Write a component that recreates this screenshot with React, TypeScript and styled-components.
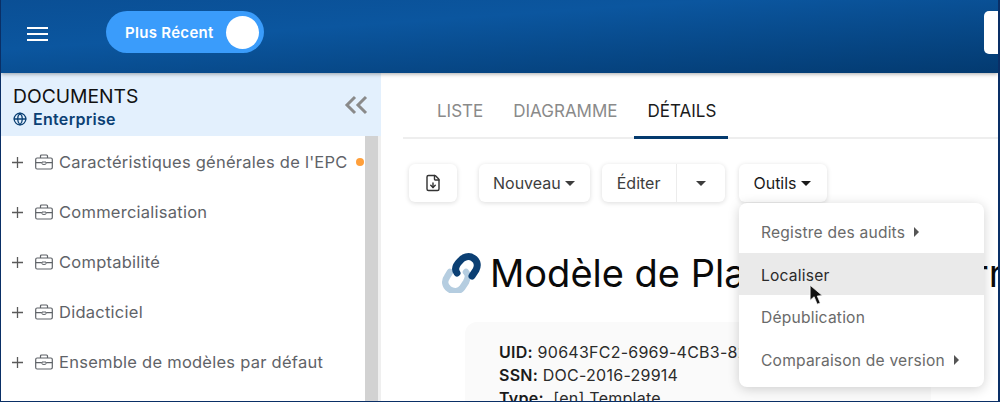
import React from "react";
import styled, { createGlobalStyle } from "styled-components";
import { Globe, FileDown } from "lucide-react";

const Global = createGlobalStyle`
  html, body { margin: 0; padding: 0; background: #fff; }
  body { font-family: Inter, "Liberation Sans", sans-serif; }
`;

const Frame = styled.div`
  position: relative;
  width: 1000px;
  height: 402px;
  box-sizing: border-box;
  border: 1px solid #0a2f66;
  border-right-width: 2px;
  border-top: 0;
  overflow: hidden;
  display: flex;
  flex-direction: column;
  background: #fff;
`;

const TopBar = styled.header`
  flex: 0 0 73px;
  display: flex;
  align-items: center;
  padding-left: 26px;
  background: linear-gradient(176deg, #0a4f95 0%, #0b569f 35%, #033a70 100%);
  box-shadow: 0 1px 4px rgba(0, 0, 0, 0.35);
  position: relative;
  z-index: 2;
`;

const Burger = styled.div`
  width: 21px;
  height: 14px;
  margin-top: -6px;
  display: flex;
  flex-direction: column;
  justify-content: space-between;
  margin-right: 58px;
  span { display: block; height: 2px; background: #fff; }
`;

const Toggle = styled.div`
  width: 158px;
  height: 42px;
  margin-top: -9px;
  box-sizing: border-box;
  border-radius: 21px;
  background: #3a9cfb;
  display: flex;
  align-items: center;
  justify-content: space-between;
  padding: 0 5px 0 19px;
  color: #fff;
  font-size: 15px;
  font-weight: 600;
  letter-spacing: 0.3px;
`;

const Knob = styled.span`
  width: 33px;
  height: 33px;
  border-radius: 50%;
  background: #fff;
`;

const SearchStub = styled.div`
  margin-left: auto;
  margin-top: -8px;
  width: 14px;
  height: 43px;
  background: #fff;
  border-radius: 5px 0 0 5px;
`;

const Body = styled.div`
  flex: 1;
  min-height: 0;
  display: flex;
`;

const Side = styled.aside`
  flex: 0 0 380px;
  display: flex;
  flex-direction: column;
`;

const SideHead = styled.div`
  flex: 0 0 63px;
  background: #e3f0fd;
  display: flex;
  align-items: center;
  justify-content: space-between;
  box-sizing: border-box;
  padding: 0 13px 0 12px;
`;

const SideHeadText = styled.div`
  padding-top: 4px;
`;

const SideTitle = styled.div`
  font-size: 19.3px;
  line-height: 24px;
  color: #111;
`;

const Scope = styled.div`
  display: flex;
  align-items: center;
  gap: 6px;
  margin-top: 1px;
  font-size: 16px;
  line-height: 21px;
  font-weight: 600;
  color: #0b4074;
  letter-spacing: 0.3px;
`;

const TreeWrap = styled.div`
  flex: 1;
  min-height: 0;
  display: flex;
`;

const Tree = styled.div`
  flex: 1;
  padding-top: 1px;
  overflow: hidden;
`;

const Row = styled.div`
  height: 50px;
  display: flex;
  align-items: center;
  padding-left: 10px;
  color: #5f6368;
  font-size: 16.5px;
  letter-spacing: 0.25px;
`;

const RowLabel = styled.span`
  white-space: nowrap;
  margin-left: 6px;
`;

const Dot = styled.span`
  width: 8px;
  height: 8px;
  border-radius: 50%;
  background: #ff9f3a;
  margin-left: 8px;
`;

const PlusIcon = styled.svg`
  flex: 0 0 auto;
  margin-right: 11px;
`;

const BriefcaseIcon = styled.svg`
  flex: 0 0 auto;
`;

const ScrollTrack = styled.div`
  flex: 0 0 16px;
  background: #efefef;
`;

const ScrollThumb = styled.div`
  width: 13px;
  height: 100%;
  background: #d2d2d2;
`;

const Main = styled.main`
  flex: 1;
  min-width: 0;
  padding-left: 22px;
  display: flex;
  flex-direction: column;
  overflow: hidden;
`;

const Tabs = styled.nav`
  flex: 0 0 66px;
  display: flex;
  align-items: stretch;
  border-bottom: 2px solid #eeeeee;
  box-sizing: border-box;
  padding-left: 34px;
`;

const Tab = styled.div<{ $active?: boolean }>`
  display: flex;
  align-items: center;
  font-size: 17px;
  padding: 12px 0 0;
  color: ${(p) => (p.$active ? "#1b1b1b" : "#8a8a8a")};
  position: relative;
  margin-right: 30px;
  &::after {
    content: "";
    display: ${(p) => (p.$active ? "block" : "none")};
    position: absolute;
    left: -14px;
    right: -12px;
    bottom: -2px;
    height: 3px;
    background: #043a6e;
  }
`;

const Toolbar = styled.div`
  display: flex;
  align-items: flex-start;
  padding: 25px 0 0 6px;
  flex: 0 0 auto;
`;

const Btn = styled.div`
  height: 38px;
  box-sizing: border-box;
  background: #fff;
  border-radius: 6px;
  box-shadow: 0 1px 5px rgba(0, 0, 0, 0.14);
  display: flex;
  align-items: center;
  font-size: 16px;
  color: #3d3d3d;
  flex: 0 0 auto;
`;

const IconBtn = styled(Btn)`
  width: 48px;
  justify-content: center;
  color: #333;
  margin-right: 22px;
`;

const LabelBtn = styled(Btn)<{ $dark?: boolean }>`
  padding: 0 ${(p) => (p.$dark ? "16px" : "15px")} 0 14px;
  gap: 4px;
  margin-right: 12px;
  color: ${(p) => (p.$dark ? "#1b1b1b" : "#3d3d3d")};
`;

const SplitBtn = styled(Btn)`
  margin-right: 14px;
`;

const SplitMain = styled.span`
  padding: 0 16px 0 15px;
  height: 100%;
  display: flex;
  align-items: center;
  border-right: 1px solid #ececec;
`;

const SplitCaret = styled.span`
  width: 48px;
  display: flex;
  justify-content: center;
`;

const Caret = styled.i<{ $dir?: "down" | "right"; $color?: string }>`
  display: inline-block;
  width: 0;
  height: 0;
  ${(p) =>
    p.$dir === "right"
      ? `border-top: 5px solid transparent; border-bottom: 5px solid transparent; border-left: 5px solid ${p.$color || "#555"};`
      : `border-left: 5.5px solid transparent; border-right: 5.5px solid transparent; border-top: 5.5px solid ${p.$color || "#3d3d3d"};`}
`;

const TitleRow = styled.div`
  display: flex;
  align-items: center;
  gap: 9px;
  padding: 49px 0 0 38px;
  white-space: nowrap;
`;

const LinkIcon = styled.svg`
  flex: 0 0 auto;
`;

const Title = styled.h1`
  margin: 0;
  font-size: 38px;
  line-height: 44px;
  font-weight: 400;
  color: #0a0a0a;
`;

const Card = styled.section`
  margin: 27px 0 0 62px;
  width: 466px;
  height: 120px;
  box-sizing: border-box;
  background: #fafafa;
  border-radius: 12px;
  padding: 19px 34px;
  font-size: 16px;
  line-height: 23px;
  letter-spacing: 0.25px;
  color: #2b2b2b;
  flex: 0 0 auto;
  white-space: nowrap;
  b { font-weight: 600; color: #1a1a1a; }
`;

const Menu = styled.div`
  position: absolute;
  left: 738px;
  top: 203px;
  width: 245px;
  height: 184px;
  background: #fff;
  border-radius: 8px;
  box-shadow: 0 2px 12px rgba(0, 0, 0, 0.18);
  display: flex;
  flex-direction: column;
  padding: 7px 0;
  box-sizing: border-box;
  z-index: 3;
`;

const MenuItem = styled.div<{ $hover?: boolean }>`
  height: 42.7px;
  flex: 0 0 auto;
  display: flex;
  align-items: center;
  gap: 9px;
  padding: 2px 0 0 22px;
  box-sizing: border-box;
  font-size: 15.6px;
  letter-spacing: 0.2px;
  color: ${(p) => (p.$hover ? "#2a2a2a" : "#6a6a6a")};
  background: ${(p) => (p.$hover ? "#eaeaea" : "transparent")};
`;

const Cursor = styled.svg`
  position: absolute;
  left: 808px;
  top: 284px;
  z-index: 4;
`;

const items = [
  "Caractéristiques générales de l'EPC",
  "Commercialisation",
  "Comptabilité",
  "Didacticiel",
  "Ensemble de modèles par défaut",
];

const Briefcase = () => (
  <BriefcaseIcon width="18" height="16" viewBox="0 0 18 16" fill="none" stroke="#5f6368" strokeWidth="1.2">
    <rect x="0.7" y="4" width="16.6" height="11" rx="1.4" />
    <path d="M5.5 4 V2 a1 1 0 0 1 1 -1 h5 a1 1 0 0 1 1 1 V4" />
    <path d="M0.7 8.6 H6.8 M11.2 8.6 H17.3" />
    <path d="M7 8 h4 v1.6 a0.8 0.8 0 0 1 -0.8 0.8 h-2.4 a0.8 0.8 0 0 1 -0.8 -0.8 Z" strokeWidth="1" />
  </BriefcaseIcon>
);

export default function App() {
  return (
    <>
      <Global />
      <Frame>
        <TopBar>
          <Burger><span /><span /><span /></Burger>
          <Toggle>
            Plus Récent
            <Knob />
          </Toggle>
          <SearchStub />
        </TopBar>
        <Body>
          <Side>
            <SideHead>
              <SideHeadText>
                <SideTitle>DOCUMENTS</SideTitle>
                <Scope>
                  <Globe size={14} strokeWidth={2.2} />
                  Enterprise
                </Scope>
              </SideHeadText>
              <svg width="24" height="20" viewBox="0 0 24 20" fill="none" stroke="#8a8a8a" strokeWidth="3">
                <path d="M11 2 L3 10 L11 18" />
                <path d="M22 2 L14 10 L22 18" />
              </svg>
            </SideHead>
            <TreeWrap>
              <Tree>
                {items.map((t, i) => (
                  <Row key={t}>
                    <PlusIcon width="13" height="13" viewBox="0 0 13 13" stroke="#5a5a5a" strokeWidth="1.3">
                      <path d="M1 6.5 H12 M6.5 1 V12" />
                    </PlusIcon>
                    <Briefcase />
                    <RowLabel>{t}</RowLabel>
                    {i === 0 && <Dot />}
                  </Row>
                ))}
              </Tree>
              <ScrollTrack><ScrollThumb /></ScrollTrack>
            </TreeWrap>
          </Side>
          <Main>
            <Tabs>
              <Tab>LISTE</Tab>
              <Tab>DIAGRAMME</Tab>
              <Tab $active>DÉTAILS</Tab>
            </Tabs>
            <Toolbar>
              <IconBtn><FileDown size={18} strokeWidth={1.9} /></IconBtn>
              <LabelBtn>Nouveau <Caret /></LabelBtn>
              <SplitBtn>
                <SplitMain>Éditer</SplitMain>
                <SplitCaret><Caret /></SplitCaret>
              </SplitBtn>
              <LabelBtn $dark>Outils <Caret $color="#1b1b1b" /></LabelBtn>
            </Toolbar>
            <TitleRow>
              <LinkIcon width="40" height="40" viewBox="0 0 40 40" fill="none" strokeLinecap="round">
                <path d="M25 19 C28 22 27 25 25 29 L21 35 C18 39 12 39 8 36 C4 33 3 28 6 24 L9 19" stroke="#b5cde0" strokeWidth="6.5" />
                <path d="M16 20 C13 16 15 12 19 8 C22 4 28 2 32 5 C37 8 37 13 35 17 L31 23" stroke="#0b3f73" strokeWidth="7" />
              </LinkIcon>
              <Title>Modèle de Plan d'action{"\u2009"}Terrain</Title>
            </TitleRow>
            <Card>
              <div><b>UID:</b> 90643FC2-6969-4CB3-82C4-7D1A</div>
              <div><b>SSN:</b> DOC-2016-29914</div>
              <div><b>Type:</b> &nbsp;[en] Template</div>
            </Card>
          </Main>
        </Body>
        <Menu>
          <MenuItem>Registre des audits <Caret $dir="right" /></MenuItem>
          <MenuItem $hover>Localiser</MenuItem>
          <MenuItem>Dépublication</MenuItem>
          <MenuItem>Comparaison de version <Caret $dir="right" /></MenuItem>
        </Menu>
        <Cursor width="16" height="22" viewBox="0 0 14 19">
          <path d="M1 1 L1 14 L4.5 11 L7.2 17.5 L9.8 16.4 L7.2 10.4 L11.6 10 Z" fill="#111" stroke="#fff" strokeWidth="0.6" />
        </Cursor>
      </Frame>
    </>
  );
}
